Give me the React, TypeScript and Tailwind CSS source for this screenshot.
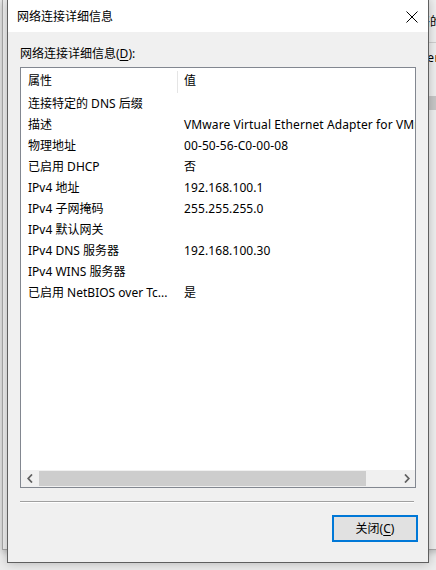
import React from "react";

const rows: [string, string][] = [
  ["连接特定的 DNS 后缀", ""],
  ["描述", "VMware Virtual Ethernet Adapter for VMnet8"],
  ["物理地址", "00-50-56-C0-00-08"],
  ["已启用 DHCP", "否"],
  ["IPv4 地址", "192.168.100.1"],
  ["IPv4 子网掩码", "255.255.255.0"],
  ["IPv4 默认网关", ""],
  ["IPv4 DNS 服务器", "192.168.100.30"],
  ["IPv4 WINS 服务器", ""],
  ["已启用 NetBIOS over Tc...", "是"],
];

const font = "font-['Noto_Sans','Noto_Sans_CJK_SC',sans-serif]";

function Chevron({ dir }: { dir: "left" | "right" }) {
  return (
    <svg width="6" height="9" viewBox="0 0 6 9" className="text-[#606060]">
      <path
        d={dir === "left" ? "M5 0.5 L1.2 4.5 L5 8.5" : "M1 0.5 L4.8 4.5 L1 8.5"}
        fill="none"
        stroke="currentColor"
        strokeWidth="1.8"
      />
    </svg>
  );
}

export default function App() {
  return (
    <div className={`relative w-[436px] h-[570px] overflow-hidden bg-[#ececec] ${font} text-[12px] text-black`}>
      {/* window behind the dialog */}
      <div className="absolute left-[2px] top-0 w-[600px] h-[550px] bg-[#f0f0f0] border-l border-b border-[#a8a8a8] shadow-[0_2px_6px_rgba(0,0,0,0.2)]">
        <span className="absolute left-[403px] top-[14px] leading-[16px]">网络的</span>
        <div className="absolute left-[420px] top-[42px] w-[40px] border-t border-[#d0d0d0]" />
        <span className="absolute left-[405px] top-[50px] leading-[16px] tracking-[0.3px]">Ether</span>
        <div className="absolute left-[420px] top-[96px] w-[40px] h-[14px] bg-[#c8c8c8]" />
      </div>

      {/* dialog */}
      <div className="absolute left-[7px] top-[-1px] w-[422px] h-[564px] flex flex-col border border-[#5f5f5f] bg-[#f0f0f0] shadow-[0_0_10px_rgba(0,0,0,0.25)]">
        <div className="h-[32px] shrink-0 bg-white flex items-center justify-between pl-[9px] pr-[9px] pt-[1px]">
          <span className="leading-[16px]">网络连接详细信息</span>
          <svg width="12" height="12" viewBox="0 0 12 12" className="mr-[1px]">
            <path d="M0.5 0.5 L11.5 11.5 M11.5 0.5 L0.5 11.5" stroke="#000" strokeWidth="1" />
          </svg>
        </div>

        <div className="flex-1 flex flex-col pl-[12px] pr-[12px] pt-[14px]">
          <div className="leading-[16px] h-[16px]">
            网络连接详细信息(<span className="underline underline-offset-2">D</span>):
          </div>

          <div className="mt-[5px] h-[421px] border border-[#828790] bg-white flex flex-col overflow-hidden">
            <div className="h-[25px] shrink-0 flex items-center">
              <div className="w-[156px] pl-[7px] pt-[1px]">属性</div>
              <div className="w-px h-[22px] bg-[#e5e5e5] self-end" />
              <div className="pl-[6px] pt-[1px]">值</div>
            </div>
            <div className="flex-1 flex flex-col">
              {rows.map(([k, v]) => (
                <div key={k} className="h-[21px] flex items-center whitespace-nowrap">
                  <div className="w-[157px] shrink-0 pl-[7px] overflow-hidden">{k}</div>
                  <div className="pl-[6px] tracking-[0.1px]">{v}</div>
                </div>
              ))}
            </div>
            <div className="h-[17px] shrink-0 flex items-center bg-[#f0f0f0]">
              <div className="w-[17px] h-full flex items-center justify-center">
                <Chevron dir="left" />
              </div>
              <div className="flex-1 h-full py-[1px] flex">
                <div className="w-[327px] ml-[1px] h-full bg-[#cdcdcd]" />
              </div>
              <div className="w-[17px] h-full flex items-center justify-center">
                <Chevron dir="right" />
              </div>
            </div>
          </div>

          <div className="mt-[13px] mr-[2px] border-t border-[#a0a0a0] border-b border-b-white" />

          <div className="mt-[12px] flex justify-end -mr-[2px]">
            <button className="w-[86px] h-[27px] border-2 border-[#0078d7] bg-[#e1e1e1] flex items-center justify-center leading-[16px]">
              关闭(<span className="underline underline-offset-2">C</span>)
            </button>
          </div>
        </div>
      </div>
    </div>
  );
}
